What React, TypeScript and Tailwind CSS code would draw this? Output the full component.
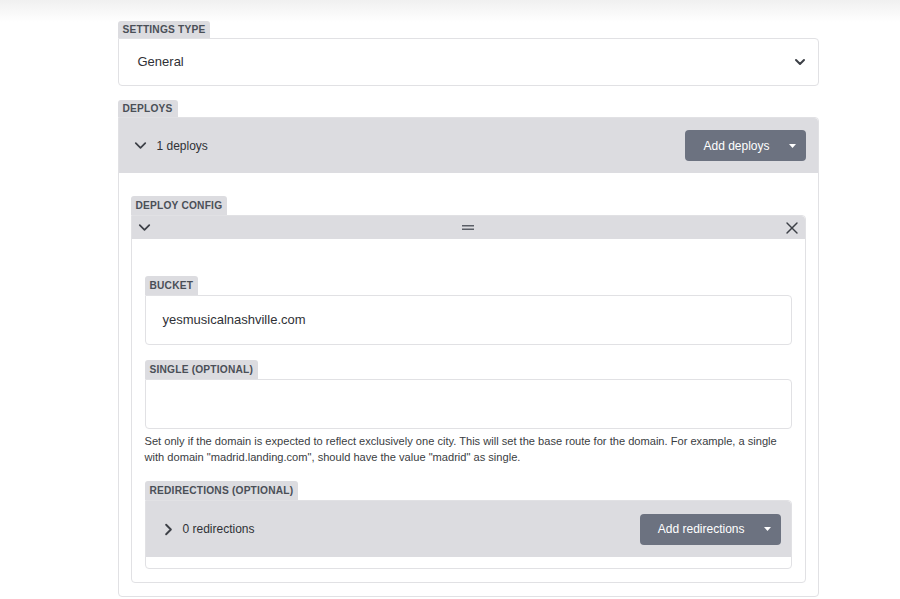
import { ChevronDown, ChevronRight, X } from 'lucide-react';
import type { ReactNode } from 'react';

const Tab = ({ children, tall = false }: { children: ReactNode; tall?: boolean }) => (
    <div
        className={`inline-flex items-center rounded-t-[3px] bg-[#dcdce0] px-[5px] text-[10.2px] font-bold uppercase tracking-[0.2px] text-[#4a4f57] ${tall ? 'h-[19px]' : 'h-[17px]'}`}
    >
        {children}
    </div>
);

const Caret = () => (
    <svg width="7" height="4" viewBox="0 0 7 4" className="ml-[19px]">
        <path d="M0 0h7L3.5 4z" fill="#ffffff" />
    </svg>
);

const SplitButton = ({ label }: { label: string }) => (
    <button className="flex h-[31px] items-center rounded-[4px] bg-[#6c7280] pl-[18px] pr-[10px] text-[12px] text-white">
        {label}
        <Caret />
    </button>
);

const TextField = ({ label, value }: { label: string; value?: string }) => (
    <div className="flex flex-col items-start">
        <Tab tall>{label}</Tab>
        <div className="flex h-[50px] w-full items-center rounded-b-[4px] rounded-tr-[4px] border border-[#e1e1e4] bg-white px-[17px] text-[13px] text-[#2f3136]">
            {value}
        </div>
    </div>
);

const DragHandle = () => (
    <svg width="12" height="5" viewBox="0 0 12 5">
        <path d="M0 0.75h12M0 4.25h12" stroke="#5b5f67" strokeWidth="1.4" />
    </svg>
);

export default function App() {
    return (
        <div className="min-h-[599px] bg-[linear-gradient(to_bottom,#f0f0f0,#ffffff_22px)] pt-[21px] font-['Liberation_Sans',Arial,sans-serif]">
            <div className="mx-auto w-[701px] translate-x-[18px]">
                {/* Settings type */}
                <div className="flex flex-col items-start">
                    <Tab>Settings type</Tab>
                    <div className="flex h-[48px] w-full items-center justify-between rounded-b-[4px] rounded-tr-[4px] border border-[#e1e1e4] bg-white pl-[19px] pr-[10px] text-[13px] text-[#2f3136]">
                        <span>General</span>
                        <ChevronDown size={16} strokeWidth={3} className="text-[#3d4047]" />
                    </div>
                </div>

                {/* Deploys */}
                <div className="mt-[14px] flex flex-col items-start">
                    <Tab>Deploys</Tab>
                    <div className="w-full rounded-b-[4px] rounded-tr-[4px] border border-[#e1e1e4] bg-white">
                        <div className="flex h-[55px] items-center justify-between rounded-tr-[4px] bg-[#dcdce0] pl-[12px] pr-[12px]">
                            <div className="flex items-center gap-[7px] text-[12px] text-[#2f3136]">
                                <ChevronDown size={19} strokeWidth={2.2} className="text-[#3d4047]" />
                                <span>1 deploys</span>
                            </div>
                            <SplitButton label="Add deploys" />
                        </div>

                        <div className="px-[12px] pb-[13px] pt-[23px]">
                            <div className="flex flex-col items-start">
                                <Tab tall>Deploy config</Tab>
                                <div className="w-full rounded-b-[4px] rounded-tr-[4px] border border-[#e1e1e4] bg-white">
                                    <div className="flex h-[23px] items-center justify-between rounded-tr-[4px] bg-[#dcdce0] pl-[3px] pr-[3px]">
                                        <ChevronDown size={19} strokeWidth={2.2} className="text-[#3d4047]" />
                                        <DragHandle />
                                        <X size={20} strokeWidth={1.7} className="text-[#3d4047]" />
                                    </div>

                                    <div className="px-[13px] pb-[13px] pt-[37px]">
                                        <TextField label="Bucket" value="yesmusicalnashville.com" />

                                        <div className="mt-[15px]">
                                            <TextField label="Single (optional)" />
                                        </div>
                                        <p className="mt-[4px] text-[11.1px] leading-[16px] text-[#3a3d42]">
                                            Set only if the domain is expected to reflect exclusively one city. This will set the base route for the domain. For example, a single
                                            with domain "madrid.landing.com", should have the value "madrid" as single.
                                        </p>

                                        <div className="mt-[16px] flex flex-col items-start">
                                            <Tab tall>Redirections (optional)</Tab>
                                            <div className="w-full rounded-b-[4px] rounded-tr-[4px] border border-[#e1e1e4] bg-white">
                                                <div className="flex h-[56px] items-center justify-between rounded-tr-[4px] bg-[#dcdce0] pl-[13px] pr-[10px]">
                                                    <div className="flex items-center gap-[5px] text-[12px] text-[#2f3136]">
                                                        <ChevronRight size={19} strokeWidth={2.4} className="text-[#3d4047]" />
                                                        <span>0 redirections</span>
                                                    </div>
                                                    <SplitButton label="Add redirections" />
                                                </div>
                                                <div className="h-[11px]" />
                                            </div>
                                        </div>
                                    </div>
                                </div>
                            </div>
                        </div>
                    </div>
                </div>
            </div>
        </div>
    );
}
